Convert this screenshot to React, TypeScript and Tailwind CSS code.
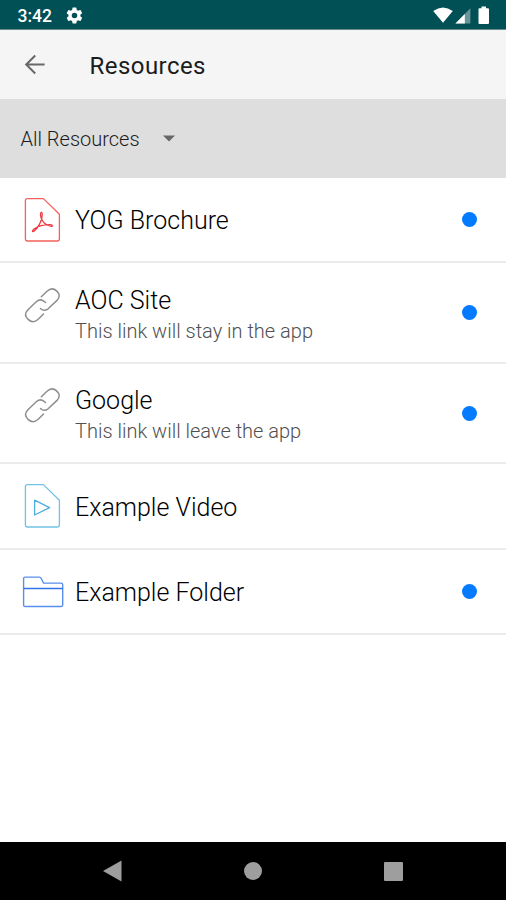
import type { ReactNode } from 'react';

type ResourceType = 'pdf' | 'link' | 'video' | 'folder';

interface Resource {
  title: string;
  description?: string;
  type: ResourceType;
  unread: boolean;
  height: string;
}

const resources: Resource[] = [
  { title: 'YOG Brochure', type: 'pdf', unread: true, height: 'h-[85px]' },
  { title: 'AOC Site', description: 'This link will stay in the app', type: 'link', unread: true, height: 'h-[101px]' },
  { title: 'Google', description: 'This link will leave the app', type: 'link', unread: true, height: 'h-[100px]' },
  { title: 'Example Video', type: 'video', unread: false, height: 'h-[86px]' },
  { title: 'Example Folder', type: 'folder', unread: true, height: 'h-[85px]' },
];

function FileOutline({ color, children }: { color: string; children: ReactNode }) {
  return (
    <svg width="44" height="48" viewBox="0 0 44 48" fill="none" stroke={color} strokeWidth="1.3" strokeLinejoin="round">
      <path d="M7.2 2.6H23.4L39.4 18.2V42.8Q39.4 45 37.2 45H7.6Q5.4 45 5.4 42.8V4.6Q5.4 2.6 7.4 2.6Z" />
      {children}
    </svg>
  );
}

function ResourceIcon({ type }: { type: ResourceType }) {
  if (type === 'pdf') {
    return (
      <FileOutline color="#f4625c">
        <g stroke="#ee3a40" strokeWidth="1.3" strokeLinecap="round">
          <path d="M21.3 22.5C20.7 20.2 19.600 17 21.200 16.500C22.900 16.300 22 20 21.700 22.500C20.500 27 17 32.500 14.200 35C12 36.600 11.800 34.800 14 33C18.500 30 25 28.600 30.300 28.700C33.800 29 32.500 31 29.800 30C26.500 29 22.800 26.500 21.300 22.500Z" />
        </g>
      </FileOutline>
    );
  }
  if (type === 'video') {
    return (
      <FileOutline color="#72c2e8">
        <path d="M14.6 18.2V33L29.600 25.600Z" stroke="#4eacdf" />
      </FileOutline>
    );
  }
  if (type === 'folder') {
    return (
      <svg width="44" height="48" viewBox="0 0 44 48" fill="none" stroke="#5a8eee" strokeWidth="1.4" strokeLinejoin="round">
        <path d="M3.6 10.500Q3.6 9.100 5 9.100H19.4Q20.6 9.100 21.4 10.700L23.6 15.100H41Q42.7 15.100 42.7 16.700V36.900Q42.7 38.500 41 38.500H5.2Q3.6 38.500 3.6 36.900Z" />
        <path d="M3.6 20.500H42.7" stroke="#2f74e8" />
      </svg>
    );
  }
  return (
    <svg width="44" height="48" viewBox="0 0 44 48" fill="none" stroke="#8e8e8e" strokeWidth="1.5" strokeLinecap="round">
      <path d="M21.300 15.800L27 10.300Q32 5.700 36.600 9.900Q41.600 14.500 37 19.400L28.100 27.800Q24 31 20.500 27.500" />
      <path d="M23.500 33L17.900 38.500Q13 43 8.100 38.400Q3.300 33.700 7.700 29L16.800 20.300Q21 16.900 25.500 21.500" />
    </svg>
  );
}

function StatusBar() {
  return (
    <div className="flex h-[30px] shrink-0 items-center border-b border-[#6b8a8e] bg-[#005056] pl-[17.5px] text-white">
      <span className="mt-1 text-[17.5px] leading-none font-medium">3:42</span>
      <svg className="mt-[1px] ml-[13px]" width="19" height="19" viewBox="0 0 24 24" fill="currentColor">
        <path d="M19.4 13a7.5 7.5 0 0 0 0-2l2.1-1.7c.2-.1.3-.4.1-.6l-2-3.5c-.1-.2-.4-.3-.6-.2l-2.5 1a7.3 7.3 0 0 0-1.7-1l-.4-2.6a.5.5 0 0 0-.5-.4h-4a.5.5 0 0 0-.5.4L9 5.1a7.3 7.3 0 0 0-1.7 1l-2.5-1c-.2-.1-.5 0-.6.2l-2 3.5c-.1.2-.1.5.1.6L4.500 11a7.5 7.5 0 0 0 0 2l-2.2 1.7c-.2.1-.2.4-.1.6l2 3.5c.1.2.4.3.6.2l2.5-1c.5.4 1.1.7 1.7 1l.4 2.6c0 .2.2.4.5.4h4c.2 0 .5-.2.5-.4l.4-2.6a7.3 7.3 0 0 0 1.7-1l2.5 1c.2.1.5 0 .6-.2l2-3.5c.1-.2.1-.5-.1-.6zM12 15.500a3.500 3.500 0 1 1 0-7 3.500 3.500 0 0 1 0 7z" />
      </svg>
      <svg className="mr-[15px] ml-auto" width="60" height="20" viewBox="0 0 60 20" fill="currentColor">
        <path d="M2.200 6Q12-1 21.800 6L12 17.800Z" />
        <path d="M39.400 3.200V18.500H24.400Z" fillOpacity=".4" />
        <path d="M33.800 9V18.500H24.400Z" />
        <path d="M48.500 3.200H50.500V1.600H55V3.200H57Q58 3.200 58 4.200V18Q58 19 57 19H48.500Q47.500 19 47.500 18V4.200Q47.500 3.200 48.500 3.200Z" />
      </svg>
    </div>
  );
}

function Header() {
  return (
    <header className="flex h-[69px] shrink-0 items-center bg-[#f5f5f5] pl-[23px]">
      <svg width="24" height="24" viewBox="0 0 24 24" fill="none" stroke="#686868" strokeWidth="2">
        <path d="M21.6 11.5H3.7M12.2 2.5L3.2 11.5L12.2 20.5" />
      </svg>
      <h1 className="mt-[3px] ml-[42.5px] text-[24px] leading-none tracking-[0.45px] text-[#1c1c1c]">Resources</h1>
    </header>
  );
}

function ResourceRow({ title, description, type, unread, height }: Resource) {
  return (
    <li className={`flex shrink-0 items-center border-b-2 border-[#ebebeb] pr-[29px] pl-5 ${height}`}>
      <div className={description ? 'mb-4' : ''}>
        <ResourceIcon type={type} />
      </div>
      <div className={description ? 'mt-[6px] ml-[11px]' : 'mt-[3px] ml-[11px]'}>
        <p className="text-[25px] leading-[30px] font-light text-black">{title}</p>
        {description && <p className="text-[20px] leading-[30px] font-light text-[#505050]">{description}</p>}
      </div>
      {unread && <span className="ml-auto size-[15px] rounded-full bg-[#047bff]" />}
    </li>
  );
}

function NavigationBar() {
  return (
    <nav className="mt-auto flex h-[58px] shrink-0 items-center justify-between bg-black pr-[103px] pl-[102px] text-[#9e9e9e]">
      <svg width="20" height="22" viewBox="0 0 20 22" fill="currentColor">
        <path d="M1 11L19.5.5V21.5Z" />
      </svg>
      <span className="size-[18px] rounded-full bg-current" />
      <span className="size-[19px] rounded-[1px] bg-current" />
    </nav>
  );
}

export default function App() {
  return (
    <div className="flex h-screen flex-col overflow-hidden bg-white font-['Roboto',sans-serif]">
      <StatusBar />
      <Header />
      <div className="flex h-[79px] shrink-0 items-center bg-[#dedede] pl-[20.5px]">
        <span className="w-[118px] text-[20px] leading-none font-light whitespace-nowrap text-[#1c1c1c]">All Resources</span>
        <svg className="ml-6" width="12" height="7" viewBox="0 0 12 7" fill="#666666">
          <path d="M0 .5H12L6 6.5Z" />
        </svg>
      </div>
      <ul className="flex flex-col">
        {resources.map((resource) => (
          <ResourceRow key={resource.title} {...resource} />
        ))}
      </ul>
      <NavigationBar />
    </div>
  );
}
